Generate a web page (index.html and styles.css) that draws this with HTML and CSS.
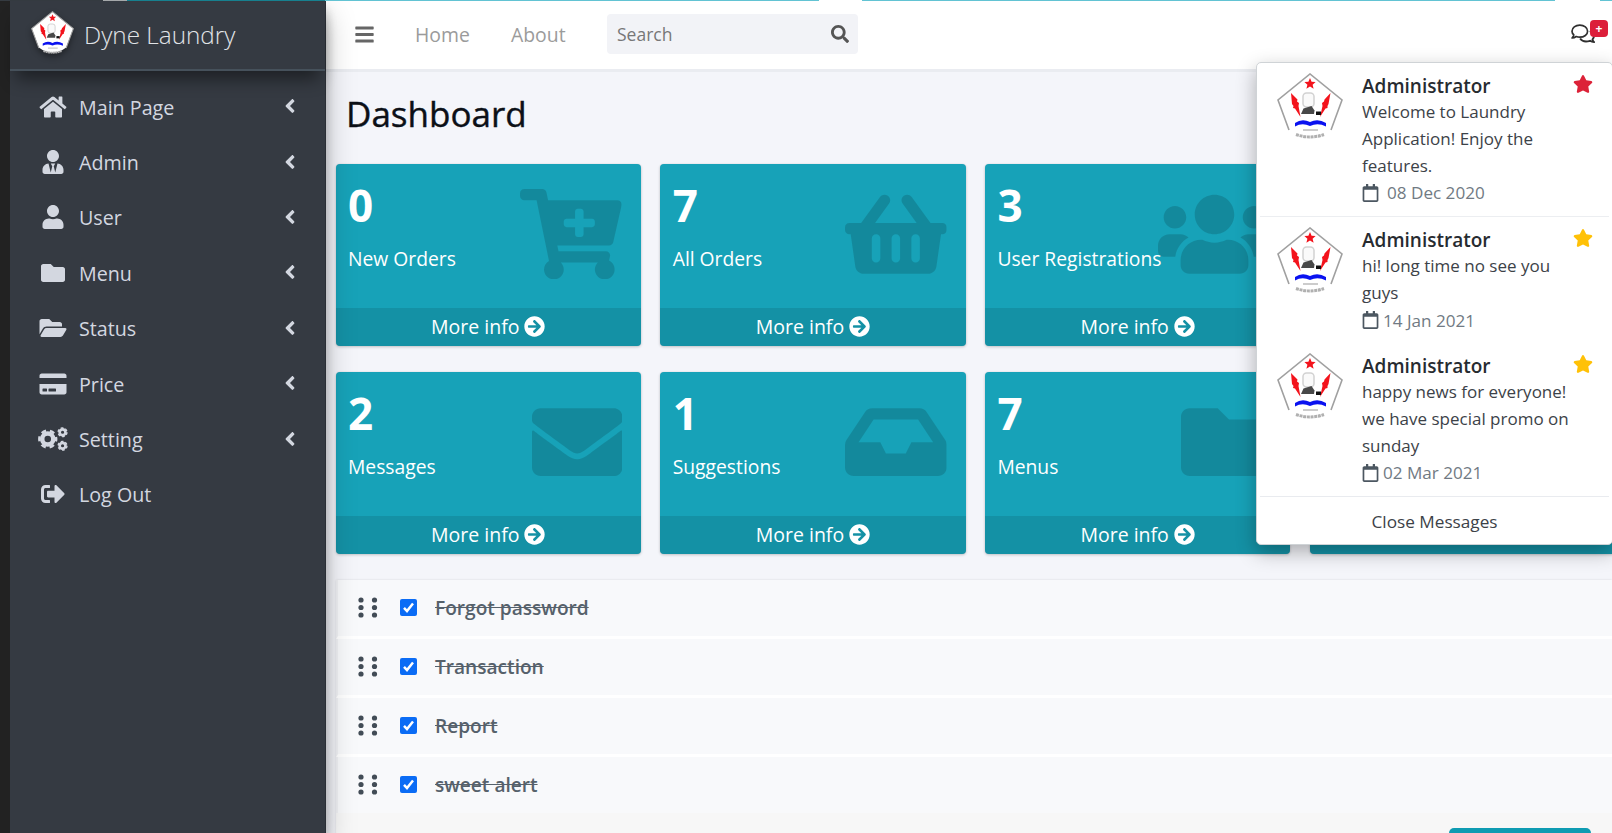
FILE: index.html
```html
<!DOCTYPE html>
<html lang="en">
<head>
<meta charset="utf-8">
<title>Dyne Laundry</title>
<link rel="stylesheet" href="styles.css">
</head>
<body>
<svg class="sprite" aria-hidden="true">
  <symbol id="home" viewBox="0 0 576 512"><path d="M280.37 148.26L96 300.11V464a16 16 0 0 0 16 16l112.06-.29a16 16 0 0 0 15.92-16V368a16 16 0 0 1 16-16h64a16 16 0 0 1 16 16v95.64a16 16 0 0 0 16 16.05L464 480a16 16 0 0 0 16-16V300L295.67 148.26a12.19 12.19 0 0 0-15.3 0zM571.6 251.47L488 182.56V44.05a12 12 0 0 0-12-12h-56a12 12 0 0 0-12 12v72.61L318.47 43a48 48 0 0 0-61 0L4.34 251.47a12 12 0 0 0-1.6 16.9l25.5 31A12 12 0 0 0 45.15 301l235.22-193.74a12.19 12.19 0 0 1 15.3 0L530.9 301a12 12 0 0 0 16.9-1.6l25.5-31a12 12 0 0 0-1.7-16.93z"/></symbol>
  <symbol id="user-tie" viewBox="0 0 448 512"><path d="M224 256c70.7 0 128-57.3 128-128S294.7 0 224 0 96 57.3 96 128s57.3 128 128 128zm95.8 32.6L272 480l-32-136 32-56h-96l32 56-32 136-47.8-191.4C56.9 292 0 350.3 0 422.4V464c0 26.5 21.5 48 48 48h352c26.5 0 48-21.5 48-48v-41.6c0-72.1-56.9-130.4-128.2-133.8z"/></symbol>
  <symbol id="user" viewBox="0 0 448 512"><path d="M224 256c70.7 0 128-57.3 128-128S294.7 0 224 0 96 57.3 96 128s57.3 128 128 128zm89.6 32h-16.7c-22.2 10.2-46.9 16-72.9 16s-50.6-5.8-72.9-16h-16.7C60.2 288 0 348.2 0 422.4V464c0 26.5 21.5 48 48 48h352c26.5 0 48-21.5 48-48v-41.6c0-74.2-60.2-134.4-134.4-134.4z"/></symbol>
  <symbol id="folder" viewBox="0 0 512 512"><path d="M464 128H272l-64-64H48C21.49 64 0 85.49 0 112v288c0 26.51 21.49 48 48 48h416c26.51 0 48-21.49 48-48V176c0-26.51-21.49-48-48-48z"/></symbol>
  <symbol id="folder-open" viewBox="0 0 576 512"><path d="M572.694 292.093L500.27 416.248A63.997 63.997 0 0 1 444.989 448H45.025c-18.523 0-30.064-20.093-20.731-36.093l72.424-124.155A64 64 0 0 1 152 256h399.964c18.523 0 30.064 20.093 20.73 36.093zM152 224h328v-48c0-26.51-21.49-48-48-48H272l-64-64H48C21.49 64 0 85.49 0 112v278.046l69.077-118.418C86.214 242.25 117.989 224 152 224z"/></symbol>
  <symbol id="card" viewBox="0 0 576 512"><path d="M0 432c0 26.5 21.5 48 48 48h480c26.5 0 48-21.5 48-48V256H0v176zm192-68c0-6.6 5.4-12 12-12h136c6.6 0 12 5.4 12 12v40c0 6.6-5.4 12-12 12H204c-6.6 0-12-5.4-12-12v-40zm-128 0c0-6.6 5.4-12 12-12h72c6.6 0 12 5.4 12 12v40c0 6.6-5.4 12-12 12H76c-6.6 0-12-5.4-12-12v-40zM576 80v48H0V80c0-26.5 21.5-48 48-48h480c26.5 0 48 21.5 48 48z"/></symbol>
  <symbol id="cogs" viewBox="0 0 640 512"><g fill="none" stroke="currentColor"><circle cx="208" cy="256" r="118" stroke-width="96"/><circle cx="208" cy="256" r="180" stroke-width="52" stroke-dasharray="104 84.500" stroke-dashoffset="52"/><circle cx="524" cy="112" r="62" stroke-width="56"/><circle cx="524" cy="112" r="94" stroke-width="30" stroke-dasharray="56 42.400"/><circle cx="524" cy="400" r="62" stroke-width="56"/><circle cx="524" cy="400" r="94" stroke-width="30" stroke-dasharray="56 42.400"/></g></symbol>
  <symbol id="sign-out" viewBox="0 0 512 512"><path d="M497 273L329 441c-15 15-41 4.5-41-17v-96H152c-13.3 0-24-10.7-24-24v-96c0-13.3 10.7-24 24-24h136V88c0-21.4 25.9-32 41-17l168 168c9.3 9.4 9.3 24.6 0 34zM192 436v-40c0-6.6-5.4-12-12-12H96c-17.7 0-32-14.3-32-32V160c0-17.7 14.3-32 32-32h84c6.6 0 12-5.4 12-12V76c0-6.6-5.4-12-12-12H96c-53 0-96 43-96 96v192c0 53 43 96 96 96h84c6.6 0 12-5.4 12-12z"/></symbol>
  <symbol id="angle" viewBox="0 0 256 512"><path d="M31.7 239l136-136c9.4-9.4 24.6-9.4 33.9 0l22.6 22.6c9.4 9.4 9.4 24.6 0 33.9L127.9 256l96.4 96.4c9.4 9.4 9.4 24.6 0 33.9L201.7 409c-9.4 9.4-24.6 9.4-33.9 0l-136-136c-9.5-9.4-9.5-24.6-.1-34z"/></symbol>
  <symbol id="bars" viewBox="0 0 448 512"><path d="M16 60h416a16 16 0 0 1 16 16v40a16 16 0 0 1-16 16H16a16 16 0 0 1-16-16V76a16 16 0 0 1 16-16zM16 220h416a16 16 0 0 1 16 16v40a16 16 0 0 1-16 16H16a16 16 0 0 1-16-16v-40a16 16 0 0 1 16-16zM16 380h416a16 16 0 0 1 16 16v40a16 16 0 0 1-16 16H16a16 16 0 0 1-16-16v-40a16 16 0 0 1 16-16z"/></symbol>
  <symbol id="search" viewBox="0 0 512 512"><path d="M505 442.7L405.3 343c-4.5-4.5-10.6-7-17-7H372c27.6-35.3 44-79.7 44-128C416 93.1 322.9 0 208 0S0 93.1 0 208s93.1 208 208 208c48.3 0 92.7-16.4 128-44v16.3c0 6.4 2.5 12.5 7 17l99.7 99.7c9.4 9.4 24.6 9.4 33.9 0l28.3-28.3c9.4-9.4 9.4-24.6.1-34zM208 336c-70.7 0-128-57.2-128-128 0-70.7 57.2-128 128-128 70.7 0 128 57.2 128 128 0 70.7-57.2 128-128 128z"/></symbol>
  <symbol id="arrow" viewBox="0 0 512 512"><path d="M256 8c137 0 248 111 248 248S393 504 256 504 8 393 8 256 119 8 256 8zm-28.9 143.6l75.5 72.4H120c-13.3 0-24 10.7-24 24v16c0 13.3 10.7 24 24 24h182.6l-75.5 72.4c-9.7 9.3-9.9 24.8-.4 34.3l11 10.9c9.4 9.4 24.6 9.4 33.9 0L404.3 273c9.4-9.4 9.4-24.6 0-33.9L271.6 106.3c-9.4-9.4-24.6-9.4-33.9 0l-11 10.9c-9.5 9.6-9.3 25.1.4 34.4z"/></symbol>
  <symbol id="cart" viewBox="0 0 576 512"><path d="M504.717 320H211.572l6.545 32h268.418c15.401 0 26.816 14.301 23.403 29.319l-5.517 24.276C523.112 414.668 536 433.828 536 456c0 31.202-25.519 56.444-56.824 55.994-29.823-.429-54.35-24.631-55.155-54.447-.44-16.287 6.085-31.049 16.803-41.548H231.176C241.553 426.165 248 440.326 248 456c0 31.813-26.528 57.431-58.67 55.938-28.54-1.325-51.751-24.385-53.251-52.917-1.158-22.034 10.436-41.455 28.051-51.586L93.883 64H24C10.745 64 0 53.255 0 40V24C0 10.745 10.745 0 24 0h102.529c11.401 0 21.228 8.021 23.513 19.19L159.208 64H551.99c15.401 0 26.816 14.301 23.403 29.319l-47.273 208C525.637 312.246 515.923 320 504.717 320zM408 168h-48v-40c0-8.837-7.163-16-16-16h-16c-8.837 0-16 7.163-16 16v40h-48c-8.837 0-16 7.163-16 16v16c0 8.837 7.163 16 16 16h48v40c0 8.837 7.163 16 16 16h16c8.837 0 16-7.163 16-16v-40h48c8.837 0 16-7.163 16-16v-16c0-8.837-7.163-16-16-16z"/></symbol>
  <symbol id="basket" viewBox="0 0 576 512"><path d="M576 216v16c0 13.255-10.745 24-24 24h-8l-26.113 182.788C514.509 462.435 494.257 480 470.37 480H105.63c-23.887 0-44.139-17.565-47.518-41.212L32 256h-8c-13.255 0-24-10.745-24-24v-16c0-13.255 10.745-24 24-24h67.341l106.78-146.821c10.395-14.292 30.407-17.453 44.701-7.058 14.293 10.395 17.453 30.408 7.058 44.701L170.477 192h235.046L326.12 82.821c-10.395-14.292-7.234-34.306 7.059-44.701 14.291-10.395 34.306-7.235 44.701 7.058L484.659 192H552c13.255 0 24 10.745 24 24zM312 392V280c0-13.255-10.745-24-24-24s-24 10.745-24 24v112c0 13.255 10.745 24 24 24s24-10.745 24-24zm112 0V280c0-13.255-10.745-24-24-24s-24 10.745-24 24v112c0 13.255 10.745 24 24 24s24-10.745 24-24zm-224 0V280c0-13.255-10.745-24-24-24s-24 10.745-24 24v112c0 13.255 10.745 24 24 24s24-10.745 24-24z"/></symbol>
  <symbol id="users" viewBox="0 0 640 512"><path d="M96 224c35.3 0 64-28.7 64-64s-28.7-64-64-64-64 28.7-64 64 28.7 64 64 64zm448 0c35.3 0 64-28.7 64-64s-28.7-64-64-64-64 28.7-64 64 28.7 64 64 64zm32 32h-64c-17.6 0-33.5 7.1-45.1 18.6 40.3 22.1 68.9 62 75.1 109.4h66c17.7 0 32-14.3 32-32v-32c0-35.3-28.7-64-64-64zm-256 0c61.9 0 112-50.1 112-112S381.9 32 320 32 208 82.1 208 144s50.1 112 112 112zm76.8 32h-8.3c-20.8 10-43.9 16-68.5 16s-47.6-6-68.5-16h-8.3C179.6 288 128 339.6 128 403.2V432c0 26.5 21.5 48 48 48h288c26.5 0 48-21.5 48-48v-28.8c0-63.6-51.6-115.2-115.2-115.2zm-223.7-13.4C161.5 263.1 145.6 256 128 256H64c-35.3 0-64 28.7-64 64v32c0 17.7 14.3 32 32 32h65.9c6.3-47.4 34.9-87.3 75.2-109.4z"/></symbol>
  <symbol id="envelope" viewBox="0 0 512 512"><path d="M502.3 190.8c3.9-3.1 9.7-.2 9.7 4.7V400c0 26.5-21.5 48-48 48H48c-26.5 0-48-21.5-48-48V195.6c0-5 5.7-7.8 9.7-4.7 22.4 17.4 52.1 39.5 154.1 113.6 21.1 15.4 56.7 47.8 92.2 47.6 35.7.3 72-32.8 92.3-47.6 102-74.1 131.6-96.3 154-113.7zM256 320c23.2.4 56.6-29.2 73.4-41.4 132.7-96.3 142.8-104.7 173.4-128.7 5.8-4.5 9.2-11.5 9.2-18.9v-19c0-26.5-21.5-48-48-48H48c-26.5 0-48 21.5-48 48v19c0 7.4 3.4 14.3 9.2 18.9 30.6 23.9 40.7 32.4 173.4 128.7 16.8 12.2 50.2 41.8 73.4 41.4z"/></symbol>
  <symbol id="inbox" viewBox="0 0 576 512"><path d="M567.938 243.908L462.25 85.374A48.003 48.003 0 0 0 422.311 64H153.689a48 48 0 0 0-39.938 21.374L8.062 243.908A47.994 47.994 0 0 0 0 270.533V400c0 26.51 21.49 48 48 48h480c26.51 0 48-21.49 48-48V270.533a47.994 47.994 0 0 0-8.062-26.625zM162.252 128h251.497l85.333 128H376l-32 64H232l-32-64H76.918l85.334-128z"/></symbol>
  <symbol id="star" viewBox="0 0 576 512"><path d="M259.3 17.8L194 150.2 47.9 171.5c-26.2 3.8-36.7 36.1-17.7 54.6l105.7 103-25 145.5c-4.5 26.3 23.2 46 46.4 33.7L288 439.6l130.7 68.7c23.2 12.2 50.9-7.4 46.4-33.7l-25-145.5 105.7-103c19-18.5 8.5-50.8-17.7-54.6L382 150.2 316.7 17.8c-11.7-23.6-45.6-23.9-57.4 0z"/></symbol>
  <symbol id="calendar" viewBox="0 0 448 512"><path d="M400 64h-48V12c0-6.6-5.4-12-12-12h-40c-6.6 0-12 5.4-12 12v52H160V12c0-6.6-5.4-12-12-12h-40c-6.6 0-12 5.4-12 12v52H48C21.5 64 0 85.5 0 112v352c0 26.5 21.5 48 48 48h352c26.5 0 48-21.5 48-48V112c0-26.5-21.5-48-48-48zm-6 400H54c-3.3 0-6-2.7-6-6V160h352v298c0 3.3-2.7 6-6 6z"/></symbol>
  <symbol id="comments" viewBox="0 0 24 20"><path d="M8.800 1.200c4.400 0 7.800 2.600 7.800 6s-3.400 6-7.800 6c-1.300 0-2.500-.2-3.600-.7-1.100.9-2.500 1.500-4.100 1.500.9-1 1.500-2 1.700-3.100C1.700 9.900 1 8.600 1 7.200c0-3.400 3.400-6 7.800-6z" fill="none" stroke="currentColor" stroke-width="1.700" stroke-linejoin="round"/><path d="M18.800 7c2.500 1 4.200 2.800 4.200 5 0 1.200-.6 2.400-1.500 3.300.2 1.100.8 2 1.600 2.800-1.600 0-3-.5-4.100-1.300-4 1.200-8.100.3-9.900-2.300" fill="none" stroke="currentColor" stroke-width="1.900" stroke-linejoin="round"/></symbol>
  <symbol id="grip" viewBox="0 0 20 21"><circle cx="3" cy="3" r="2.600"/><circle cx="3" cy="10.500" r="2.600"/><circle cx="3" cy="18" r="2.600"/><circle cx="16.500" cy="3" r="2.600"/><circle cx="16.500" cy="10.500" r="2.600"/><circle cx="16.500" cy="18" r="2.600"/></symbol>
  <symbol id="emblem" viewBox="0 0 66 66">
    <path d="M33 1L65 27 54 56Q33 72 12 56L1 27Z" fill="#fff"/>
    <path d="M12 57L1 27 33 1 65 27 54 57" fill="none" stroke="#a0a0a0" stroke-width="1.600"/>
    <path d="M33 5l1.600 3.700 4 .3-3 2.700 1 4-3.600-2.200-3.600 2.200 1-4-3-2.700 4-.3z" fill="#f3131c"/>
    <path d="M14 20l6.500 6.500-.5 2 2 1.500-.5 3 2 11-5.500-8.500-2-.5.500-2-1.500-2z" fill="#f3131c"/>
    <path d="M53.500 20l-6 6.500-.5 2-2 1.500.5 3-2.500 11 5.500-8.500 2-.5 0-2 1-2z" fill="#f3131c"/>
    <rect x="26" y="20" width="11" height="14" rx="3.500" fill="#fafafa" stroke="#d2d2d2" stroke-width="1.500"/>
    <path d="M26.500 35.500l8-2.500 3 4.500-.5 3.500H24z" fill="#484848"/><path d="M39 38.500h5v3.500h-5z" fill="#111"/>
    <path d="M18 53.500v-3.500q7-5 15-1 8-4 16 1v3.500q-8-4-16-.5-8-3.500-15 .5z" fill="#0a12f0"/>
    <path d="M26 57h15" stroke="#ccc" stroke-width="2"/><path d="M19 61.500q14 5 28 0" fill="none" stroke="#b0b0b0" stroke-width="3" stroke-dasharray="3 .7"/>
  </symbol>
</svg>

<div class="app">
  <aside class="sidebar">
    <a class="brand"><svg class="brand-logo"><use href="#emblem"/></svg><span>Dyne Laundry</span></a>
    <nav class="menu">
      <a><svg><use href="#home"/></svg><span>Main Page</span><svg class="chev"><use href="#angle"/></svg></a>
      <a><svg><use href="#user-tie"/></svg><span>Admin</span><svg class="chev"><use href="#angle"/></svg></a>
      <a><svg><use href="#user"/></svg><span>User</span><svg class="chev"><use href="#angle"/></svg></a>
      <a><svg><use href="#folder"/></svg><span>Menu</span><svg class="chev"><use href="#angle"/></svg></a>
      <a><svg><use href="#folder-open"/></svg><span>Status</span><svg class="chev"><use href="#angle"/></svg></a>
      <a><svg><use href="#card"/></svg><span>Price</span><svg class="chev"><use href="#angle"/></svg></a>
      <a><svg><use href="#cogs"/></svg><span>Setting</span><svg class="chev"><use href="#angle"/></svg></a>
      <a><svg><use href="#sign-out"/></svg><span>Log Out</span></a>
    </nav>
  </aside>

  <div class="main">
    <header class="topbar">
      <svg class="bars"><use href="#bars"/></svg>
      <a class="link home">Home</a>
      <a class="link about">About</a>
      <div class="search"><span>Search</span><svg><use href="#search"/></svg></div>
      <div class="inbox"><svg><use href="#comments"/></svg><b class="badge">+</b></div>
    </header>

    <h1>Dashboard</h1>

    <section class="cards">
      <article class="card"><div class="body"><strong>0</strong><p>New Orders</p><svg class="w576"><use href="#cart"/></svg></div><a class="more">More info <svg><use href="#arrow"/></svg></a></article>
      <article class="card"><div class="body"><strong>7</strong><p>All Orders</p><svg class="w576"><use href="#basket"/></svg></div><a class="more">More info <svg><use href="#arrow"/></svg></a></article>
      <article class="card"><div class="body"><strong>3</strong><p>User Registrations</p><svg class="w640"><use href="#users"/></svg></div><a class="more">More info <svg><use href="#arrow"/></svg></a></article>
      <article class="card"><div class="body"></div><a class="more"></a></article>
      <article class="card"><div class="body"><strong>2</strong><p>Messages</p><svg class="w512"><use href="#envelope"/></svg></div><a class="more">More info <svg><use href="#arrow"/></svg></a></article>
      <article class="card"><div class="body"><strong>1</strong><p>Suggestions</p><svg class="w576"><use href="#inbox"/></svg></div><a class="more">More info <svg><use href="#arrow"/></svg></a></article>
      <article class="card"><div class="body"><strong>7</strong><p>Menus</p><svg class="w512"><use href="#folder"/></svg></div><a class="more">More info <svg><use href="#arrow"/></svg></a></article>
      <article class="card"><div class="body"></div><a class="more"></a></article>
    </section>

    <section class="todo">
      <ul>
        <li><svg class="grip"><use href="#grip"/></svg><i class="check"><svg viewBox="0 0 17 17"><path d="M4 8.800l3 3.200 6-7.500"/></svg></i><s>Forgot password</s></li>
        <li><svg class="grip"><use href="#grip"/></svg><i class="check"><svg viewBox="0 0 17 17"><path d="M4 8.800l3 3.200 6-7.500"/></svg></i><s>Transaction</s></li>
        <li><svg class="grip"><use href="#grip"/></svg><i class="check"><svg viewBox="0 0 17 17"><path d="M4 8.800l3 3.200 6-7.500"/></svg></i><s>Report</s></li>
        <li><svg class="grip"><use href="#grip"/></svg><i class="check"><svg viewBox="0 0 17 17"><path d="M4 8.800l3 3.200 6-7.500"/></svg></i><s>sweet alert</s></li>
      </ul>
      <footer><a class="button"></a></footer>
    </section>
  </div>

  <div class="dropdown">
    <div class="msg">
      <svg class="avatar"><use href="#emblem"/></svg>
      <div><h3>Administrator</h3><p>Welcome to Laundry<br>Application! Enjoy the<br>features.</p><time><svg><use href="#calendar"/></svg><span class="gap">08 Dec 2020</span></time></div>
      <svg class="star red"><use href="#star"/></svg>
    </div>
    <div class="msg">
      <svg class="avatar"><use href="#emblem"/></svg>
      <div><h3>Administrator</h3><p>hi! long time no see you<br>guys</p><time><svg><use href="#calendar"/></svg><span>14 Jan 2021</span></time></div>
      <svg class="star"><use href="#star"/></svg>
    </div>
    <div class="msg">
      <svg class="avatar"><use href="#emblem"/></svg>
      <div><h3>Administrator</h3><p>happy news for everyone!<br>we have special promo on<br>sunday</p><time><svg><use href="#calendar"/></svg><span>02 Mar 2021</span></time></div>
      <svg class="star"><use href="#star"/></svg>
    </div>
    <a class="close">Close Messages</a>
  </div>
  <div class="strip"></div>
</div>
</body>
</html>
```

FILE: styles.css
```css
* { box-sizing: border-box; margin: 0; padding: 0; }
body { font-family: "Open Sans", "Noto Sans", sans-serif; font-size: 19px; overflow: hidden; }
svg { fill: currentColor; flex: none; display: block; }
.sprite { position: absolute; width: 0; height: 0; }
.app { position: relative; display: flex; width: 1612px; height: 833px; overflow: hidden; background: #f4f5fa; }
.strip { position: absolute; inset: 0 0 auto 0; height: 1px; background: linear-gradient(90deg, #343a40 103px, #a5a8aa 103px 127px, #17808f 127px 325px, #62c3d3 325px 819px, #fff 819px 862px, #62c3d3 862px 1555px, #fff 1555px 1600px, #62c3d3 1600px); z-index: 9; }

/* Sidebar */
.sidebar { position: relative; z-index: 2; width: 326px; flex: none; border-left: 10px solid #222; border-right: 1px solid #2b2f36; background: #353a42; box-shadow: 0 14px 28px rgba(0,0,0,.25), 0 10px 10px rgba(0,0,0,.22); color: #d3d7e0; }
.brand { display: flex; align-items: center; height: 71px; padding: 0 0 2px 21px; border-bottom: 2px solid #46515b; box-shadow: 0 14px 16px -6px rgba(0,0,0,.45); font-size: 24.300px; font-weight: 300; color: #e1e4e8; }
.brand span { padding-top: 1px; }
.brand-logo { width: 43px; height: 43px; margin: -2px 10px 0 0; filter: drop-shadow(0 3px 3px rgba(0,0,0,.4)); }
.menu { display: flex; flex-direction: column; padding-top: 8px; }
.menu a { display: flex; align-items: center; height: 55.400px; padding-left: 28px; font-size: 19.700px; }
.menu svg { width: 30px; height: 24px; }
.menu span { margin-left: 11px; flex: 1; padding-top: 1px; }
.menu .chev { width: 12px; height: 22px; margin: -1px 29px 0 0; }

/* Top bar */
.main { flex: 1; min-width: 0; }
.topbar { display: flex; align-items: center; height: 72px; padding: 0 0 1px 29px; border-bottom: 3px solid #eaecf1; background: #fff; color: #9b9b9b; font-size: 19.400px; }
.bars { width: 19px; height: 21px; color: #666; }
.link { margin-left: 41px; width: 55px; white-space: nowrap; }
.about { width: 56px; }
.search { display: flex; align-items: center; justify-content: space-between; width: 251px; height: 40px; margin-left: 40px; padding: 0 9px 0 10px; border-radius: 4px; background: #f2f3f7; color: #777; font-size: 17.500px; }
.search svg { width: 18px; height: 18px; color: #555; }
.inbox { position: relative; margin: 0 3px 0 auto; width: 38px; height: 30px; color: #2f2f2f; }
.inbox svg { width: 24px; height: 20px; margin-top: 5px; }
.badge { position: absolute; left: 19px; top: 1px; width: 18px; height: 17px; border-radius: 4px; background: #dc1f3a; color: #fff; font-size: 12px; line-height: 17px; text-align: center; }
h1 { height: 91.500px; padding: 17px 0 0 20px; font-size: 35px; line-height: 50px; font-weight: 500; color: #0c1017; -webkit-text-stroke: .4px #0c1017; }

/* Stat cards */
.cards { display: grid; grid-template-columns: repeat(4, 305.500px); column-gap: 19.200px; row-gap: 26px; margin-left: 9.500px; }
.card { display: flex; flex-direction: column; height: 182px; border-radius: 4px; overflow: hidden; background: #17a2b8; color: #fff; box-shadow: 0 0 1px rgba(0,0,0,.13), 0 1px 3px rgba(0,0,0,.2); }
.body { position: relative; flex: 1; padding: 14px 0 0 12.500px; }
.body strong { display: block; font-size: 44px; line-height: 54px; font-weight: 700; }
.body p { position: relative; z-index: 1; margin-top: 14px; line-height: 26px; font-size: 19.300px; white-space: nowrap; }
.body svg { position: absolute; right: 19px; top: 25px; height: 90.400px; color: rgba(0,0,0,.15); }
.w576 { width: 101.700px; }
.w640 { width: 113px; }
.w512 { width: 90.400px; }
.more { display: flex; align-items: center; justify-content: center; gap: 5px; height: 38px; padding-bottom: 1px; background: rgba(0,0,0,.1); font-size: 19.500px; }
.more svg { width: 21px; height: 21px; }

/* Todo list */
.todo { margin: 26px 0 0 10px; background: #f7f7f7; box-shadow: 0 0 2px rgba(0,0,0,.12); }
.todo ul { list-style: none; }
.todo li { display: flex; align-items: center; height: 59px; padding: 0 0 0 20px; border-left: 2px solid #f0f1f4; border-bottom: 3px solid #fff; background: #f8f9fb; color: #56616b; font-weight: 600; font-size: 19.100px; }
.todo li:last-child { border-bottom: 0; height: 56px; }
.grip { width: 20px; height: 21px; color: #424c56; }
.check { width: 17px; height: 17px; margin: 0 18px 0 22px; border-radius: 2px; background: #0b6cf5; }
.check path { fill: none; stroke: #fff; stroke-width: 2.500; }
.todo footer { display: flex; justify-content: flex-end; padding: 15px 21px 0 0; height: 60px; }
.button { width: 142px; height: 40px; border-radius: 5px; background: #0e9bb2; }

/* Messages dropdown */
.dropdown { position: absolute; z-index: 3; left: 1256px; top: 62px; width: 357px; height: 483px; padding: 0 3px; border: 1px solid #cfd3d6; border-radius: 5px; background: #fff; box-shadow: 0 7px 20px rgba(0,0,0,.3); color: #3c4248; }
.msg { display: flex; height: 126px; padding: 10px 16px 0 17px; }
.msg:first-child { height: 154px; border-bottom: 1px solid #eceef1; }
.msg:nth-child(3) { height: 154px; border-bottom: 1px solid #e9ebef; }
.avatar { width: 66px; height: 66px; margin-right: 19px; }
.msg > div { flex: 1; min-width: 0; white-space: nowrap; }
.msg h3 { font-size: 19px; line-height: 27px; font-weight: 600; color: #272b30; }
.msg p { font-size: 17px; line-height: 26.800px; margin-top: -1px; }
.msg time { display: flex; align-items: center; height: 27px; font-size: 17.100px; color: #717a83; }
.msg time svg { width: 17px; height: 18px; margin-right: 4px; color: #4c5761; }
.msg time .gap { margin-left: 4px; }
.star { width: 20px; height: 18px; margin-top: 2px; color: #ffc107; }
.star.red { color: #dc2238; }
.close { display: block; text-align: center; line-height: 49px; font-size: 17.200px; }
```
